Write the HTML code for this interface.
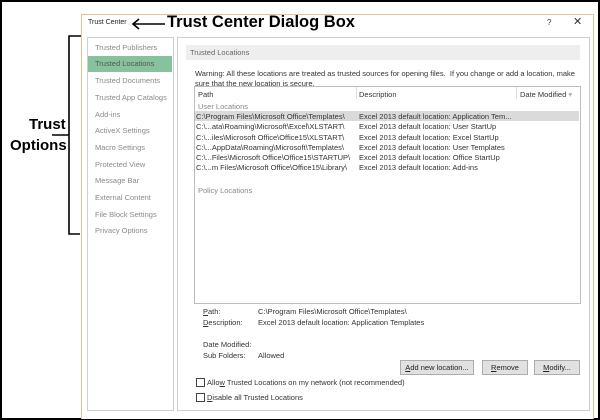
<!DOCTYPE html>
<html><head><style>
body{margin:0;width:600px;height:420px;overflow:hidden;background:#fff;font-family:"Liberation Sans",sans-serif;position:relative}
.a{position:absolute;white-space:nowrap}
.s{font-size:7.5px;color:#333}
.nav{font-size:7.5px;color:#8a8a8a;left:95px}
.b{font-weight:bold;color:#000;font-size:15px}
.btn{position:absolute;top:360px;height:13px;border:1px solid #adadad;background:#e1e1e1;font-size:7.5px;color:#222;text-align:center;line-height:13px}
.cb{position:absolute;left:196px;width:7px;height:7px;border:1px solid #444;background:#fff}
</style></head><body>
<div class="a" style="left:0;top:0;width:596px;height:416px;border:2px solid #000"></div>
<!-- dialog -->
<div class="a" style="left:81px;top:14px;width:511px;height:404px;border:1px solid #e8c48a;border-bottom:none;background:#fff"></div>
<div class="a s" style="left:88px;top:19px;font-size:7px;color:#222">Trust Center</div>
<svg class="a" style="left:131px;top:18px" width="36" height="12"><line x1="3" y1="6" x2="34" y2="6" stroke="#000" stroke-width="1.6"/><path d="M8 1 L2 6 L8 11" fill="none" stroke="#000" stroke-width="1.6"/></svg>
<div class="a b" style="left:167px;top:13px;font-size:16.5px">Trust Center Dialog Box</div>
<div class="a s" style="left:547px;top:18px;font-size:8px">?</div>
<div class="a" style="left:573px;top:15px;font-size:11px;color:#333">✕</div>
<!-- left nav -->
<div class="a" style="left:87px;top:37px;width:85px;height:372px;border:1px solid #cfcfcf"></div>
<div class="a" style="left:88px;top:56px;width:84px;height:16px;background:#88c29c"></div>
<div class="a nav" style="top:43px">Trusted Publishers</div>
<div class="a nav" style="top:59px;color:#555">Trusted Locations</div>
<div class="a nav" style="top:76px">Trusted Documents</div>
<div class="a nav" style="top:93px">Trusted App Catalogs</div>
<div class="a nav" style="top:110px">Add-ins</div>
<div class="a nav" style="top:126px">ActiveX Settings</div>
<div class="a nav" style="top:143px">Macro Settings</div>
<div class="a nav" style="top:160px">Protected View</div>
<div class="a nav" style="top:176px">Message Bar</div>
<div class="a nav" style="top:193px">External Content</div>
<div class="a nav" style="top:210px">File Block Settings</div>
<div class="a nav" style="top:226px">Privacy Options</div>
<!-- bracket -->
<svg class="a" style="left:40px;top:30px" width="42" height="210"><path d="M41 6 L29 6 L29 204 L40 204 M12 105 L29 105" fill="none" stroke="#000" stroke-width="1.6"/></svg>
<div class="a b" style="left:29px;top:116px">Trust</div>
<div class="a b" style="left:10px;top:137px">Options</div>
<!-- right panel -->
<div class="a" style="left:177px;top:37px;width:411px;height:372px;border:1px solid #cfcfcf"></div>
<div class="a" style="left:186px;top:45px;width:394px;height:15px;background:#eeeeee"></div>
<div class="a s" style="left:190px;top:48px;color:#666">Trusted Locations</div>
<div class="a s" style="left:195px;top:69px;line-height:9.5px">Warning: All these locations are treated as trusted sources for opening files.&nbsp; If you change or add a location, make<br>sure that the new location is secure.</div>
<div class="a" style="left:194px;top:86px;width:385px;height:216px;border:1px solid #bdbdbd"></div>
<div class="a" style="left:356px;top:87px;width:1px;height:12px;background:#ddd"></div>
<div class="a" style="left:516px;top:87px;width:1px;height:12px;background:#ddd"></div>
<div class="a s" style="left:198px;top:90px">Path</div>
<div class="a s" style="left:359px;top:90px">Description</div>
<div class="a s" style="left:520px;top:90px">Date Modified <span style="color:#aaa">▾</span></div>
<div class="a s" style="left:198px;top:102px;color:#888">User Locations</div>
<div class="a" style="left:195px;top:111px;width:384px;height:10px;background:#dadada"></div>
<div class="a s" style="left:196px;top:112px;line-height:10.3px">C:\Program Files\Microsoft Office\Templates\<br>C:\...ata\Roaming\Microsoft\Excel\XLSTART\<br>C:\...iles\Microsoft Office\Office15\XLSTART\<br>C:\...AppData\Roaming\Microsoft\Templates\<br>C:\...Files\Microsoft Office\Office15\STARTUP\<br>C:\...m Files\Microsoft Office\Office15\Library\</div>
<div class="a s" style="left:359px;top:112px;line-height:10.3px">Excel 2013 default location: Application Tem...<br>Excel 2013 default location: User StartUp<br>Excel 2013 default location: Excel StartUp<br>Excel 2013 default location: User Templates<br>Excel 2013 default location: Office StartUp<br>Excel 2013 default location: Add-ins</div>
<div class="a s" style="left:198px;top:186px;color:#888">Policy Locations</div>
<div class="a s" style="left:203px;top:306px;line-height:11px"><u>P</u>ath:<br><u>D</u>escription:<br><br>Date Modified:<br>Sub Folders:</div>
<div class="a s" style="left:258px;top:306px;line-height:11px">C:\Program Files\Microsoft Office\Templates\<br>Excel 2013 default location: Application Templates<br><br><br>Allowed</div>
<div class="btn" style="left:400px;width:72px"><u>A</u>dd new location...</div>
<div class="btn" style="left:482px;width:44px"><u>R</u>emove</div>
<div class="btn" style="left:534px;width:44px"><u>M</u>odify...</div>
<div class="cb" style="top:378px"></div>
<div class="cb" style="top:393px"></div>
<div class="a s" style="left:207px;top:378px">Allo<u>w</u> Trusted Locations on my network (not recommended)</div>
<div class="a s" style="left:207px;top:393px"><u>D</u>isable all Trusted Locations</div>
</body></html>
